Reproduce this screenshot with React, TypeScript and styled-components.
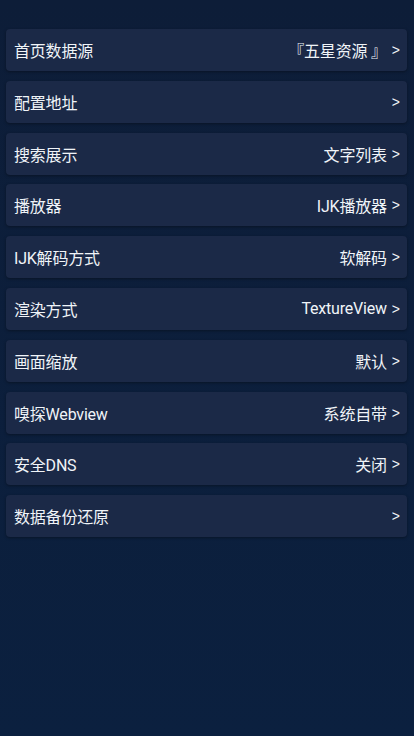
import styled, { createGlobalStyle } from 'styled-components';

const GlobalStyle = createGlobalStyle`
	html, body {
		margin: 0;
		padding: 0;
		background: #0b1f3d;
	}
	body {
		font-family: Roboto, "Noto Sans CJK SC", sans-serif;
	}
`;

const items = [
	{ label: '首页数据源', value: '『五星资源 』' },
	{ label: '配置地址', value: '' },
	{ label: '搜索展示', value: '文字列表' },
	{ label: '播放器', value: 'IJK播放器' },
	{ label: 'IJK解码方式', value: '软解码' },
	{ label: '渲染方式', value: 'TextureView' },
	{ label: '画面缩放', value: '默认' },
	{ label: '嗅探Webview', value: '系统自带' },
	{ label: '安全DNS', value: '关闭' },
	{ label: '数据备份还原', value: '' },
];

function App() {
	return (
		<Page>
			<GlobalStyle />
			<List>
				{items.map((item) => (
					<Row key={item.label}>
						<Label>{item.label}</Label>
						<Right>
							{item.value && <Value>{item.value}</Value>}
							<Arrow>&gt;</Arrow>
						</Right>
					</Row>
				))}
			</List>
		</Page>
	);
}

const Page = styled.div`
	min-height: 736px;
	background: linear-gradient(180deg, #0d1d38 0%, #0b203f 100%);
	padding: 29px 7px 0 6px;
	box-sizing: border-box;
`;

const List = styled.div`
	display: flex;
	flex-direction: column;
	gap: 9.8px;
`;

const Row = styled.div`
	display: flex;
	align-items: center;
	justify-content: space-between;
	height: 42px;
	padding: 0 7px 0 8px;
	background: #1b2947;
	border-radius: 4px;
	box-shadow: 0 1px 3px rgba(0, 0, 0, 0.35);
	color: #f0f4f8;
`;

const Label = styled.span`
	font-size: 16px;
	letter-spacing: -0.2px;
`;

const Right = styled.div`
	display: flex;
	align-items: center;
	gap: 5px;
`;

const Value = styled.span`
	font-size: 16px;
	letter-spacing: -0.2px;
`;

const Arrow = styled.span`
	font-size: 14px;
	font-family: "Liberation Sans", sans-serif;
`;

export default App;
